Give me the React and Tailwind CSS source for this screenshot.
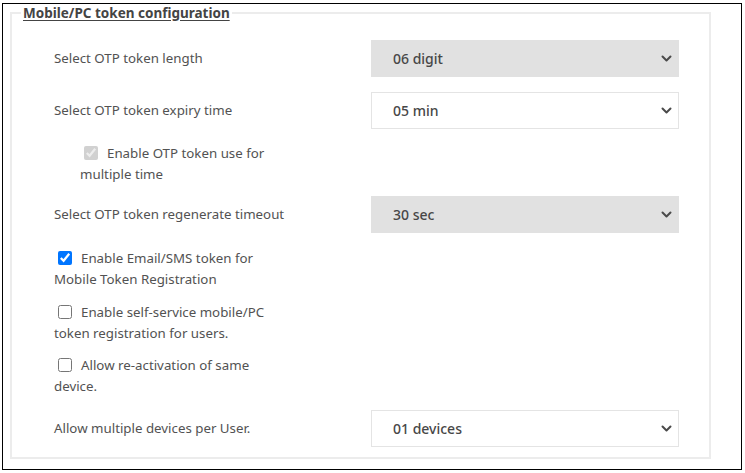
import React from "react";

function Chevron() {
  return (
    <svg className="w-[11px] h-[7px] text-[#4a4a4a]" viewBox="0 0 11 7" fill="none">
      <path d="M1.5 1.5l4 4 4-4" stroke="currentColor" strokeWidth="2" strokeLinecap="round" strokeLinejoin="round" />
    </svg>
  );
}

function FakeSelect({ value, disabled }) {
  return (
    <div
      className={`w-[308px] h-[37px] flex items-center justify-between pl-[21px] pr-[6px] ${
        disabled ? "bg-[#e1e1e1] border border-[#e1e1e1]" : "bg-white border border-[#e4e4e4]"
      }`}
    >
      <span className="text-[14px] font-medium text-[#474747]">{value}</span>
      <Chevron />
    </div>
  );
}

function SelectRow({ label, value, disabled, className = "" }) {
  return (
    <div className={`flex items-center ${className}`}>
      <div className="w-[317px] text-[13.3px] text-[#525252]">{label}</div>
      <FakeSelect value={value} disabled={disabled} />
    </div>
  );
}

function CheckRow({ label, checked, disabled, className = "" }) {
  return (
    <label className={`block text-[13.3px] leading-[21px] text-[#525252] ${className}`}>
      <input
        type="checkbox"
        defaultChecked={checked}
        disabled={disabled}
        className="w-[14px] h-[14px] ml-[4px] mr-[9px] align-[-2px]"
      />
      {label}
    </label>
  );
}

export default function App() {
  return (
    <div className="w-[745px] h-[473px] bg-white font-['Noto_Sans',_sans-serif] pt-[3px] pl-[2px]">
      <div className="w-[740px] h-[467px] border border-black pl-[7px]">
        <fieldset className="w-[701px] border-2 border-[#ececec] pl-[42px] pb-[10px]">
          <legend className="-ml-[33px] px-[2px] text-[13.5px] leading-[18px] font-bold text-[#444] underline underline-offset-2">
            Mobile/PC token configuration
          </legend>

          <SelectRow className="mt-[18px]" label="Select OTP token length" value="06 digit" disabled />
          <SelectRow className="mt-[15px]" label="Select OTP token expiry time" value="05 min" />

          <div className="pl-[26px] mt-[14px]">
            <CheckRow className="w-[200px]" label="Enable OTP token use for multiple time" checked disabled />
          </div>

          <SelectRow className="mt-[11px]" label="Select OTP token regenerate timeout" value="30 sec" disabled />

          <CheckRow className="w-[225px] mt-[15px]" label="Enable Email/SMS token for Mobile Token Registration" checked />
          <CheckRow className="w-[225px] mt-[12px]" label="Enable self-service mobile/PC token registration for users." />
          <CheckRow className="w-[225px] mt-[11px]" label="Allow re-activation of same device." />

          <SelectRow className="mt-[13px]" label="Allow multiple devices per User." value="01 devices" />
        </fieldset>
      </div>
    </div>
  );
}
